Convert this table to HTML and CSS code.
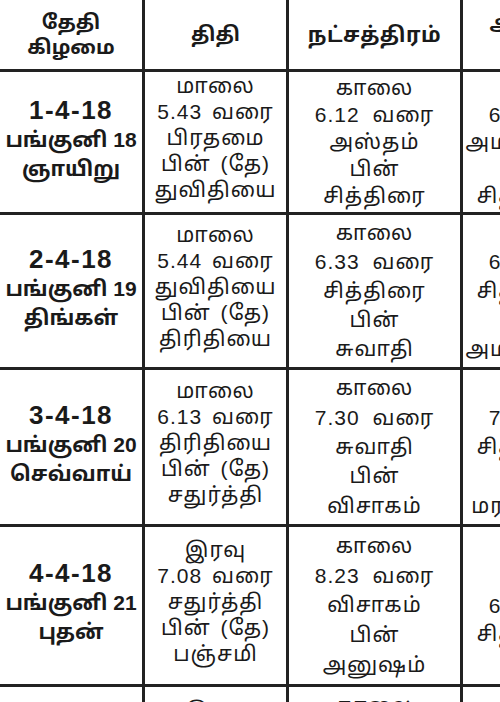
FILE: index.html
```html
<!DOCTYPE html>
<html lang="ta">
<head>
<meta charset="utf-8">
<title>பஞ்சாங்கம்</title>
<link rel="stylesheet" href="styles.css">
</head>
<body>
<div class="sheet">
  <div class="cell head"><span>தேதி</span><span>கிழமை</span></div>
  <div class="cell head"><span>திதி</span></div>
  <div class="cell head"><span>நட்சத்திரம்</span></div>
  <div class="cell head"><span>அமிர்தாதி</span><span>யோகம்</span></div>

  <div class="cell day"><span class="date">1-4-18</span><span>பங்குனி 18</span><span>ஞாயிறு</span></div>
  <div class="cell tithi"><span>மாலை</span><span>5.43 வரை</span><span>பிரதமை</span><span>பின் (தே)</span><span>துவிதியை</span></div>
  <div class="cell star"><span>காலை</span><span>6.12 வரை</span><span>அஸ்தம்</span><span>பின்</span><span>சித்திரை</span></div>
  <div class="cell star"><span>காலை</span><span>6.12 வரை</span><span>அமிர்தயோகம்</span><span>பின்</span><span>சித்தயோகம்</span></div>

  <div class="cell day"><span class="date">2-4-18</span><span>பங்குனி 19</span><span>திங்கள்</span></div>
  <div class="cell tithi"><span>மாலை</span><span>5.44 வரை</span><span>துவிதியை</span><span>பின் (தே)</span><span>திரிதியை</span></div>
  <div class="cell star"><span>காலை</span><span>6.33 வரை</span><span>சித்திரை</span><span>பின்</span><span>சுவாதி</span></div>
  <div class="cell star"><span>காலை</span><span>6.33 வரை</span><span>சித்தயோகம்</span><span>பின்</span><span>அமிர்தயோகம்</span></div>

  <div class="cell day"><span class="date">3-4-18</span><span>பங்குனி 20</span><span>செவ்வாய்</span></div>
  <div class="cell tithi"><span>மாலை</span><span>6.13 வரை</span><span>திரிதியை</span><span>பின் (தே)</span><span>சதுர்த்தி</span></div>
  <div class="cell star"><span>காலை</span><span>7.30 வரை</span><span>சுவாதி</span><span>பின்</span><span>விசாகம்</span></div>
  <div class="cell star"><span>காலை</span><span>7.30 வரை</span><span>சித்தயோகம்</span><span>பின்</span><span>மரணயோகம்</span></div>

  <div class="cell day"><span class="date">4-4-18</span><span>பங்குனி 21</span><span>புதன்</span></div>
  <div class="cell tithi"><span>இரவு</span><span>7.08 வரை</span><span>சதுர்த்தி</span><span>பின் (தே)</span><span>பஞ்சமி</span></div>
  <div class="cell star"><span>காலை</span><span>8.23 வரை</span><span>விசாகம்</span><span>பின்</span><span>அனுஷம்</span></div>
  <div class="cell short"><span>காலை</span><span>6.50 வரை</span><span>சித்தயோகம்</span></div>

  <div class="cell day"><span class="date">5-4-18</span><span>பங்குனி 22</span><span>வியாழன்</span></div>
  <div class="cell tithi"><span>இரவு</span><span>8.10 வரை</span><span>பஞ்சமி</span><span>பின் (தே)</span><span>சஷ்டி</span></div>
  <div class="cell star"><span>காலை</span><span>9.40 வரை</span><span>அனுஷம்</span><span>பின்</span><span>கேட்டை</span></div>
  <div class="cell star"><span>காலை</span><span>9.40 வரை</span><span>சித்தயோகம்</span><span>பின்</span><span>அமிர்தயோகம்</span></div>
</div>
</body>
</html>
```

FILE: styles.css
```css
html, body {
  margin: 0;
  padding: 0;
  background: #ffffff;
  overflow: hidden;
}

body {
  width: 500px;
  height: 702px;
  color: #1a1a1a;
  font-family: "Liberation Sans", "Noto Sans Tamil", "Lohit Tamil", "Noto Sans", sans-serif;
}

.sheet {
  display: grid;
  grid-template-columns: 145px 144px 174px 174px;
  grid-template-rows: 72px 143px 155px 157px 160px 160px;
  width: 637px;
}

.cell {
  box-sizing: border-box;
  border-right: 3px solid #222222;
  border-bottom: 3px solid #222222;
  display: flex;
  flex-direction: column;
  align-items: center;
  text-align: center;
  white-space: nowrap;
  font-size: 21px;
}

.head {
  justify-content: center;
  font-weight: bold;
  font-size: 20px;
  line-height: 25px;
}

.head:nth-child(3) {
  font-size: 21px;
  letter-spacing: 0.5px;
}

.day {
  justify-content: center;
  font-weight: bold;
  font-size: 21px;
  line-height: 29px;
  padding-bottom: 6px;
}

.day .date {
  font-size: 26px;
  letter-spacing: 1.5px;
}

.tithi {
  justify-content: center;
  line-height: 26px;
  padding-bottom: 8px;
  letter-spacing: 1px;
  word-spacing: 3px;
}

.star {
  justify-content: space-evenly;
  line-height: 22px;
  letter-spacing: 1px;
  word-spacing: 6px;
}

.short {
  justify-content: center;
  line-height: 28px;
  letter-spacing: 1px;
  word-spacing: 6px;
}
```
